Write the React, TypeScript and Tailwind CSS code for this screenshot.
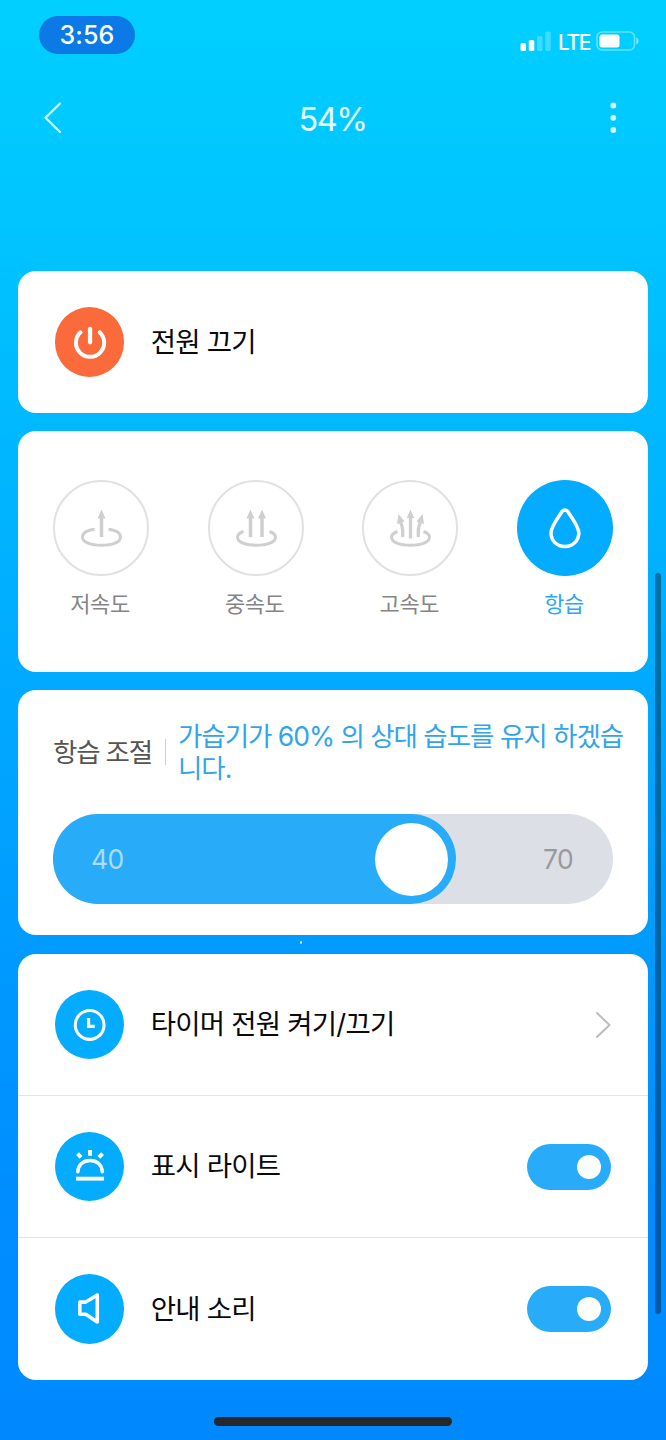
import type { ReactNode } from "react";

function StatusBar() {
  return (
    <div className="flex h-[68px] items-start justify-between pl-[39px] pr-[26px]">
      <div className="mt-[15.5px] flex h-[38px] w-24 items-center justify-center rounded-full bg-[#0c7ae6] pb-px pt-[2px] text-[25px] font-medium leading-none tracking-[0.1px] text-white">
        3:56
      </div>
      <div className="mt-[31px] flex h-5 items-center">
        <svg width="31" height="20" viewBox="0 0 31 20" fill="white">
          <rect x="0.5" y="12" width="5.5" height="8" rx="1.6" />
          <rect x="8.8" y="9" width="5.5" height="11" rx="1.6" />
          <rect x="17" y="5" width="5.5" height="15" rx="1.6" opacity="0.25" />
          <rect x="25.2" y="0.5" width="5.5" height="19.5" rx="1.6" opacity="0.25" />
        </svg>
        <span className="ml-[7px] mt-[2px] w-[33px] whitespace-nowrap text-[21px] font-medium leading-none tracking-[-1.4px] text-white">LTE</span>
        <svg className="ml-[5px]" width="44" height="20" viewBox="0 0 44 20" fill="none">
          <rect x="1" y="1" width="37.5" height="18" rx="5" stroke="white" strokeOpacity="0.4" strokeWidth="1.6" />
          <rect x="3.5" y="3.5" width="20" height="13" rx="2.5" fill="white" />
          <path d="M40.3 6.5c3 1.2 3 5.800 0 7z" fill="white" fillOpacity="0.5" />
        </svg>
      </div>
    </div>
  );
}

function NavBar() {
  return (
    <header className="flex h-[100px] items-center justify-between pl-[43px] pr-[46px]">
      <svg width="20" height="34" viewBox="0 0 20 34" fill="none" stroke="#d6f8ff" strokeWidth="2.3" strokeLinecap="round" strokeLinejoin="round">
        <path d="M17 2.500L2.500 16.800L17 31" />
      </svg>
      <h1 className="-ml-[4px] mt-[5px] text-[32.500px] leading-none tracking-[-1.5px] text-[#e6faff]">54%</h1>
      <svg width="14" height="34" viewBox="0 0 14 34" fill="#d6f8ff">
        <circle cx="7.300" cy="4.500" r="2.900" />
        <circle cx="7.300" cy="16.800" r="2.900" />
        <circle cx="7.300" cy="29" r="2.900" />
      </svg>
    </header>
  );
}

function Badge({ orange, children }: { orange?: boolean; children: ReactNode }) {
  return (
    <div className={`flex size-[69.500px] shrink-0 items-center justify-center rounded-full ${orange ? "bg-[#fa6a3a]" : "bg-[#03acff]"}`}>
      <svg className="size-full" viewBox="0 0 70 70" fill="none" stroke="white" strokeWidth="3.500" strokeLinecap="round" strokeLinejoin="round">
        {children}
      </svg>
    </div>
  );
}

function Row({ icon, label, children }: { icon: ReactNode; label: string; children?: ReactNode }) {
  return (
    <div className="flex h-[142px] items-center pl-[36.800px] pr-[37px]">
      {icon}
      <span className="ml-[26.500px] mt-px flex-1 whitespace-nowrap text-[27.500px] leading-none tracking-[-0.78px] text-[#0a0a0a]">{label}</span>
      {children}
    </div>
  );
}

function Toggle() {
  return (
    <div className="flex h-[46px] w-21 items-center justify-end rounded-full bg-[#28abf9] pr-[10.500px]">
      <div className="size-6 rounded-full bg-white" />
    </div>
  );
}

function Mode({ label, active, children }: { label: string; active?: boolean; children: ReactNode }) {
  return (
    <div className="flex w-24 flex-col items-center">
      <div className={`flex size-24 items-center justify-center rounded-full ${active ? "bg-[#03acff]" : "border-2 border-[#e0e1e3]"}`}>
        <svg className="shrink-0" width="96" height="96" viewBox="0 0 96 96" fill="none">
          {children}
        </svg>
      </div>
      <span className={`mt-[16.500px] -ml-[2px] text-[22px] leading-[22px] tracking-[-0.4px] whitespace-nowrap ${active ? "text-[#28a9f5]" : "text-[#858585]"}`}>{label}</span>
    </div>
  );
}

export default function App() {
  return (
    <div
      lang="ko"
      className="relative flex h-[1440px] w-[666px] flex-col overflow-hidden bg-[linear-gradient(180deg,#00d0ff_0%,#00c3ff_17%,#00b5ff_34%,#009cff_64%,#008dff_84%,#0089ff_100%)] font-['Inter','Noto_Sans_CJK_KR',sans-serif]"
    >
      <StatusBar />
      <NavBar />
      <main className="mt-[103px] flex flex-col px-[18px]">
        <section className="rounded-[18px] bg-white">
          <Row
            label="전원 끄기"
            icon={
              <Badge orange>
                <path d="M25.700 25.500A14.200 14.200 0 1 0 44.900 25.500" strokeWidth="4" />
                <path d="M35.300 22V35.500" strokeWidth="4.300" />
              </Badge>
            }
          />
        </section>

        <section className="mt-[18px] flex h-[241px] items-start justify-between rounded-[18px] bg-white px-[35px] pt-[49.400px]">
          <Mode label="저속도">
            <path d="M41.500 49.300C34 50.300 29.500 53 29.500 57.200C29.500 62.300 38 65.300 48.500 65.300S67.500 62.300 67.500 57.200C67.500 53 63 50.300 55.500 49.300" stroke="#cfcfd0" strokeWidth="3" />
            <path d="M48.500 57V36" stroke="#cfcfd0" strokeWidth="3.500" />
            <path d="M44.500 38.500L48.500 29.500L52.500 38.500z" fill="#cfcfd0" />
          </Mode>
          <Mode label="중속도">
            <path d="M35.500 51.500C31.500 52.900 29.500 54.900 29.500 57.200C29.500 62.300 38 65.300 48.500 65.300S67.500 62.300 67.500 57.200C67.500 54.900 65.500 52.900 61.500 51.500" stroke="#cfcfd0" strokeWidth="3" />
            <path d="M42.500 57V36M54 57V36" stroke="#cfcfd0" strokeWidth="3.500" />
            <path d="M38.500 38.500L42.500 29.500L46.500 38.500zM50 38.500L54 29.500L58 38.500z" fill="#cfcfd0" />
          </Mode>
          <Mode label="고속도">
            <path d="M35.500 51.500C31.500 52.900 29.500 54.900 29.500 57.200C29.500 62.300 38 65.300 48.500 65.300S67.500 62.300 67.500 57.200C67.500 54.900 65.500 52.900 61.500 51.500" stroke="#cfcfd0" strokeWidth="3" />
            <path d="M48.500 58.500V36M40.700 57V51C40.700 46.500 39.500 44 37.800 40M56.300 57V51C56.300 46.500 57.500 44 59.300 40" stroke="#cfcfd0" strokeWidth="3.300" />
            <path d="M44.700 38L48.500 29.500L52.300 38zM35 44L36.500 34L42.500 41.500zM54.500 41.500L60.500 34L62 44z" fill="#cfcfd0" />
          </Mode>
          <Mode label="항습" active>
            <path d="M45.200 31.300C46.500 29.400 49.300 29.400 50.600 31.300C54.500 37.500 61.800 46.500 61.800 53C61.800 61 55.500 66.500 47.900 66.500S34 61 34 53C34 46.500 41.300 37.500 45.200 31.300Z" stroke="white" strokeWidth="3.500" />
          </Mode>
        </section>

        <section className="mt-[18px] h-[245px] rounded-[18px] bg-white px-[35px] pt-[30px]">
          <div className="flex h-16 items-center">
            <h2 className="w-[112px] shrink-0 whitespace-nowrap text-[26.500px] leading-none tracking-[-1.2px] text-[#555]">항습 조절</h2>
            <div className="h-[26px] w-px shrink-0 bg-[#d0d0d0]" />
            <p className="ml-3 whitespace-nowrap text-[26.500px] leading-8 tracking-[-1.02px] text-[#31a5ea]">
              가습기가 60% 의 상대 습도를 유지 하겠습
              <br />
              니다.
            </p>
          </div>
          <div className="mt-[30px] flex h-[90px] w-[560px] items-center rounded-full bg-[#dddfe7]">
            <div className="flex h-full w-[403px] items-center justify-between rounded-full bg-[#28abf9] pl-[38px] pr-[8px]">
              <span className="text-[26.500px] leading-none tracking-[-0.5px] text-[#a9deff]">40</span>
              <div className="size-[73px] rounded-full bg-white" />
            </div>
            <span className="ml-[87px] text-[26.500px] leading-none tracking-[-0.5px] text-[#999a9e]">70</span>
          </div>
        </section>

        <div className="flex h-[19px] justify-center pt-[6px]">
          <div className="mr-16 size-[2.500px] rounded-full bg-[#d5f1ff]" />
        </div>

        <section className="divide-y divide-[#e3e4e6] rounded-[18px] bg-white">
          <Row
            label="타이머 전원 켜기/끄기"
            icon={
              <Badge>
                <circle cx="34.900" cy="35.200" r="14.500" strokeWidth="3.100" />
                <path d="M33.800 28.300V36.600H40" strokeWidth="3.200" strokeLinecap="butt" strokeLinejoin="miter" />
              </Badge>
            }
          >
            <svg width="16" height="28" viewBox="0 0 16 28" fill="none" stroke="#bdbdbf" strokeWidth="2" strokeLinecap="round" strokeLinejoin="round">
              <path d="M2 2L14.500 14L2 26" />
            </svg>
          </Row>
          <Row
            label="표시 라이트"
            icon={
              <Badge>
                <path d="M23 40C23.300 33 28.300 28.700 35.300 28.700S47.300 33 47.600 40" strokeWidth="3.600" />
                <path d="M21.200 47H49.400" strokeWidth="3.900" strokeLinecap="butt" />
                <path d="M35.300 18.200V23.800M22.700 21.800L26.300 25.600M47.900 21.800L44.300 25.600" strokeWidth="4" strokeLinecap="butt" />
              </Badge>
            }
          >
            <Toggle />
          </Row>
          <Row
            label="안내 소리"
            icon={
              <Badge>
                <path d="M25 28.300H31L42.600 21.200V48.400L31 40.500H25Z" strokeWidth="3.600" />
              </Badge>
            }
          >
            <Toggle />
          </Row>
        </section>
      </main>

      <div className="absolute left-[655px] top-[573px] h-[741px] w-[6px] rounded-full bg-black/35" />
      <div className="absolute bottom-[14px] left-[214px] h-[9px] w-[238px] rounded-full bg-[#27282b]" />
    </div>
  );
}
